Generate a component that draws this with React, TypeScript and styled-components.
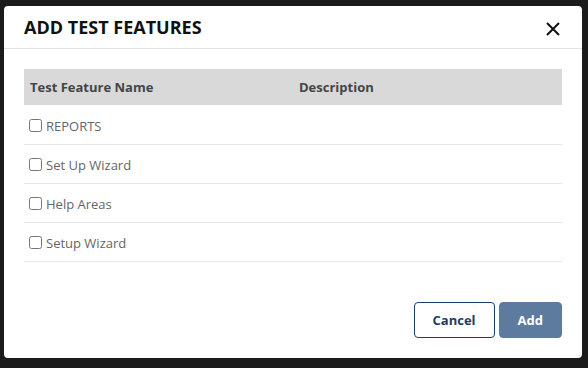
import React from 'react'
import styled, { createGlobalStyle } from 'styled-components'

const Global = createGlobalStyle`
  * {
    box-sizing: border-box;
  }
  body {
    margin: 0;
    background: #1b1b1b;
    font-family: 'Open Sans', 'Liberation Sans', sans-serif;
  }
`

const Backdrop = styled.div`
  width: 588px;
  height: 368px;
  padding: 6px 6px 10px 4px;
`

const Modal = styled.div`
  display: flex;
  flex-direction: column;
  height: 100%;
  background: #fff;
  border-radius: 4px;
  overflow: hidden;
`

const Header = styled.div`
  display: flex;
  align-items: center;
  justify-content: space-between;
  height: 43px;
  padding: 0 20px 0 20px;
  border-bottom: 1px solid #e3e3e3;
`

const Title = styled.h2`
  margin: 0;
  font-size: 18px;
  font-weight: 700;
  color: #111;
  letter-spacing: 0;
`

const Close = styled.button`
  display: flex;
  padding: 0;
  border: 0;
  background: none;
  margin-top: 3px;
  margin-right: 2px;
  cursor: pointer;
`

const Body = styled.div`
  flex: 1;
  padding: 20px 20px 0 20px;
`

const Table = styled.table`
  width: 100%;
  border-collapse: collapse;
  font-size: 13px;
`

const Th = styled.th`
  height: 36px;
  padding: 0 6px;
  background: #d9d9d9;
  color: #454545;
  font-weight: 700;
  text-align: left;
  width: 50%;
`

const Td = styled.td`
  height: 39px;
  padding: 4px 0 0 4px;
  border-bottom: 1px solid #e8e8e8;
  color: #666;
  vertical-align: middle;
`

const Label = styled.label`
  display: inline-flex;
  align-items: center;
  gap: 4px;
`

const Check = styled.input`
  width: 13px;
  height: 13px;
  margin: 0 0 0 1px;
`

const Footer = styled.div`
  display: flex;
  justify-content: flex-end;
  gap: 4px;
  padding: 0 20px 20px;
`

const Button = styled.button<{ $primary?: boolean }>`
  height: 36px;
  padding: 0 18px;
  border-radius: 4px;
  font-family: inherit;
  font-size: 13px;
  font-weight: 700;
  border: 1px solid ${(p) => (p.$primary ? '#5c7b9e' : '#1c3d6b')};
  background: ${(p) => (p.$primary ? '#5c7b9e' : '#fff')};
  color: ${(p) => (p.$primary ? '#fff' : '#1c3d6b')};
`

const features = ['REPORTS', 'Set Up Wizard', 'Help Areas', 'Setup Wizard']

export default function App() {
  return (
    <Backdrop>
      <Global />
      <Modal>
        <Header>
          <Title>ADD TEST FEATURES</Title>
          <Close aria-label='Close'>
            <svg width='14' height='14' viewBox='0 0 14 14'>
              <path d='M1 1 L13 13 M13 1 L1 13' stroke='#111' strokeWidth='2' />
            </svg>
          </Close>
        </Header>
        <Body>
          <Table>
            <thead>
              <tr>
                <Th>Test Feature Name</Th>
                <Th>Description</Th>
              </tr>
            </thead>
            <tbody>
              {features.map((name) => (
                <tr key={name}>
                  <Td>
                    <Label>
                      <Check type='checkbox' />
                      {name}
                    </Label>
                  </Td>
                  <Td />
                </tr>
              ))}
            </tbody>
          </Table>
        </Body>
        <Footer>
          <Button>Cancel</Button>
          <Button $primary>Add</Button>
        </Footer>
      </Modal>
    </Backdrop>
  )
}
